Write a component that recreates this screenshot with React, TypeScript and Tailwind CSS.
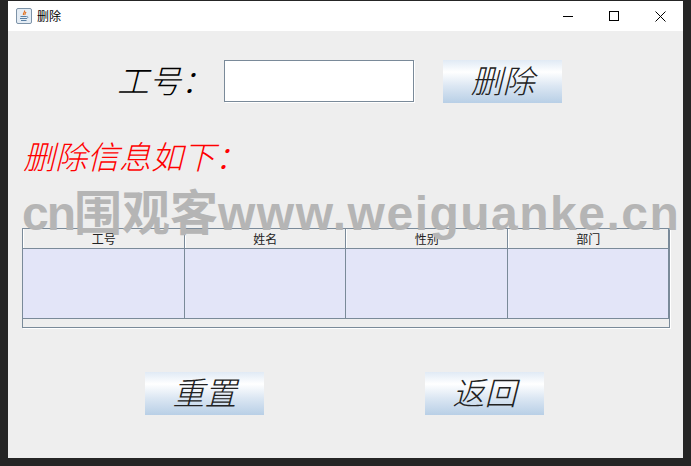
const cjk = "font-['Liberation_Serif','Noto_Sans_CJK_SC',sans-serif]";

const GradientButton = ({ label, className }: { label: string; className?: string }) => (
  <button
    className={`flex h-[43px] w-[119px] items-center justify-center bg-[linear-gradient(180deg,#e0eaf5_0%,#ffffff_28%,#dce7f3_60%,#b8cfe6_100%)] text-[32px] leading-none font-light italic text-[#222] ${cjk} ${className ?? ""}`}
  >
    {label}
  </button>
);

const JavaIcon = () => (
  <svg width="16" height="16" viewBox="0 0 16 16" className="shrink-0">
    <rect x="0.5" y="0.5" width="15" height="15" rx="1.5" fill="#e4ecf4" stroke="#7d93a8" />
    <path d="M8.5 2.5c1 1.5-2 2.5-1 4.5M10 4c-.5 1-1.5 1.500-1 3" fill="none" stroke="#e2701f" strokeWidth="1.200" />
    <path d="M4.500 8.500h6M4 10.500h7M5 12.500h5.500" stroke="#5a7fa3" strokeWidth="1" />
    <path d="M10.500 8.500c1.500-.5 2 1.500 0 2" fill="none" stroke="#5a7fa3" strokeWidth="0.800" />
  </svg>
);

const WindowControls = () => (
  <div className="flex items-center">
    <div className="flex h-[30px] w-[46px] items-center justify-center">
      <div className="h-px w-[10px] bg-black" />
    </div>
    <div className="flex h-[30px] w-[46px] items-center justify-center">
      <div className="h-[10px] w-[10px] border border-black" />
    </div>
    <div className="flex h-[30px] w-[46px] items-center justify-center">
      <svg width="11" height="11" viewBox="0 0 11 11">
        <path d="M0.500 0.500l10 10M10.500 0.500l-10 10" stroke="#000" strokeWidth="1" />
      </svg>
    </div>
  </div>
);

const columns = ["工号", "姓名", "性别", "部门"];

const App = () => {
  return (
    <div className="relative h-[466px] w-[691px] overflow-hidden bg-[#252525] pt-px pl-2">
      <div className="flex h-[457px] w-[675px] flex-col bg-[#eeeeee]">
        <div className="flex h-[30px] items-center justify-between bg-white pl-[8px]">
          <div className="flex items-center gap-[5px]">
            <JavaIcon />
            <span className="text-[12px] leading-none text-black font-['Noto_Sans_CJK_SC',sans-serif]">删除</span>
          </div>
          <WindowControls />
        </div>

        <div className="mt-[29px] flex items-start">
          <span className={`mt-[6px] ml-[109px] w-[107px] text-[32px] leading-none font-light italic text-black ${cjk}`}>工号：</span>
          <input className="h-[42px] w-[190px] border border-[#7a8a99] bg-white shadow-[1px_1px_0_#fff]" />
          <GradientButton label="删除" className="ml-[29px]" />
        </div>

        <p className={`mt-[39px] ml-[15px] text-[32px] leading-none font-light italic text-[#ff0000] ${cjk}`}>删除信息如下：</p>

        <div className="mt-[54px] ml-[14px] flex h-[100px] w-[648px] flex-col border border-[#7a8a99] bg-[#eeeeee] shadow-[1px_1px_0_#fff]">
          <div className="grid h-[20px] grid-cols-4 border-b border-[#7a8a99]">
            {columns.map((c) => (
              <div
                key={c}
                className="flex items-center justify-center border-r border-[#7a8a99] pt-px pl-px text-[12px] leading-none text-[#222] shadow-[inset_1px_0_0_#fff] font-['Noto_Sans_CJK_SC',sans-serif]"
              >
                {c}
              </div>
            ))}
          </div>
          <div className="grid h-[70px] grid-cols-4 border-b border-[#7a8a99] bg-[#e3e5f8]">
            {columns.map((c) => (
              <div key={c} className="border-r border-[#7a8a99]" />
            ))}
          </div>
        </div>

        <div className="mt-[44px] flex">
          <GradientButton label="重置" className="ml-[137px]" />
          <GradientButton label="返回" className="ml-[161px]" />
        </div>
      </div>

      <div className="absolute top-[189px] left-[22px] text-[48px] leading-[50px] font-bold tracking-[1.500px] whitespace-nowrap text-[#b5b5b5] font-['Liberation_Sans','Noto_Sans_CJK_SC',sans-serif]">
        <span className="tracking-[-2px]">cn</span>
        <span className="tracking-[0px]">围观客</span>
        www.weiguanke.cn
      </div>
    </div>
  );
};

export default App;
